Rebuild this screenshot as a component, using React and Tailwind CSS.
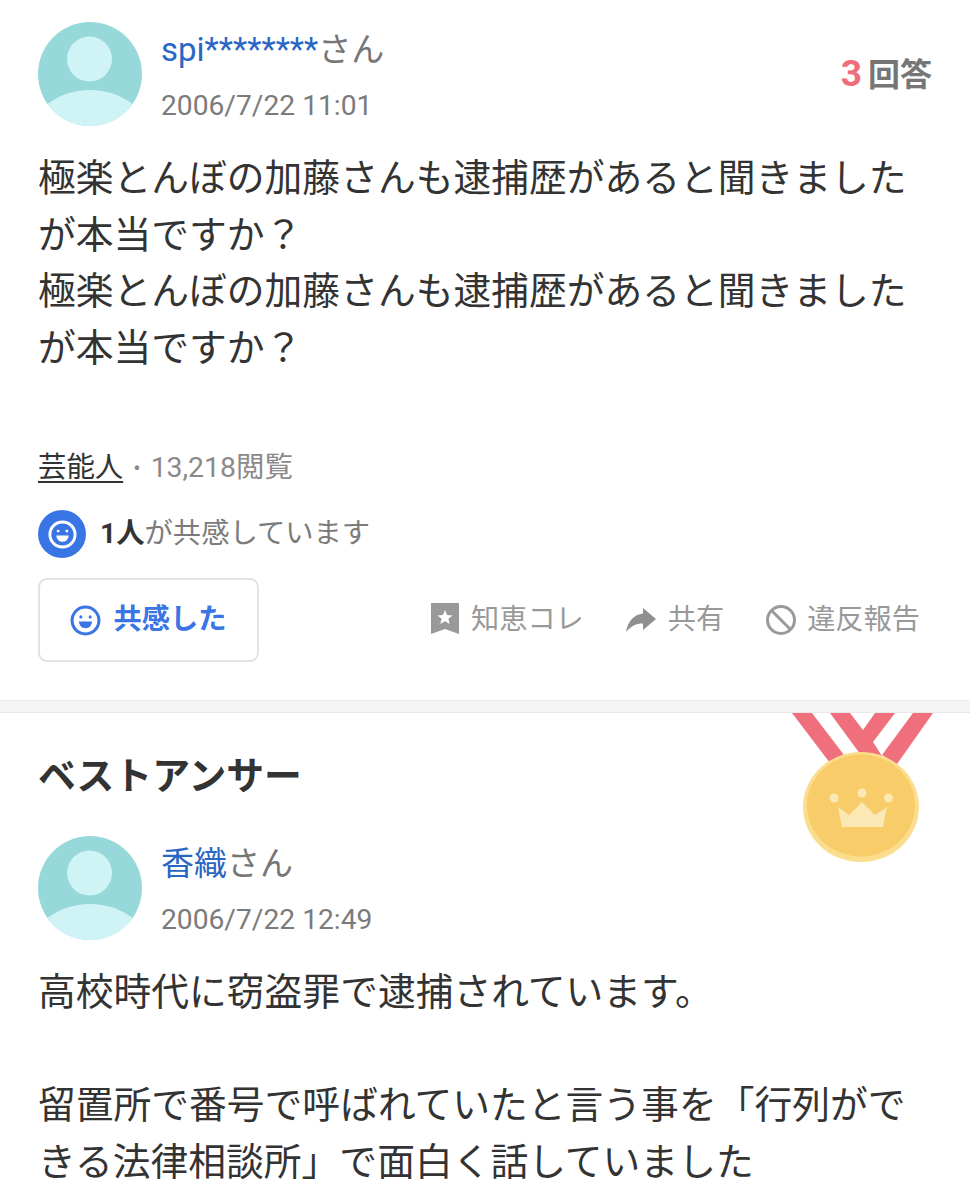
function Avatar() {
  return (
    <svg width="104" height="104" viewBox="0 0 104 104" className="shrink-0">
      <circle cx="52" cy="52" r="52" fill="#97d9da" />
      <circle cx="51.5" cy="37" r="22.5" fill="#d0f3f5" />
      <path d="M9.5 82 Q28 68 52 68 Q76 68 94.5 82 A52 52 0 0 1 9.5 82 Z" fill="#d0f3f5" />
    </svg>
  );
}

function Smile({ size, color, stroke = 3 }) {
  return (
    <svg width={size} height={size} viewBox="0 0 30 30" className="shrink-0">
      <circle cx="15" cy="15" r="13" fill="none" stroke={color} strokeWidth={stroke} />
      <circle cx="10.5" cy="11.5" r="1.5" fill={color} />
      <circle cx="19.5" cy="11.5" r="1.5" fill={color} />
      <path d="M8.5 16 H21.5 Q20.5 22.5 15 22.5 Q9.5 22.5 8.5 16 Z" fill={color} />
    </svg>
  );
}

function UserHead({ name, suffix, date, right }) {
  return (
    <div className="flex items-start">
      <Avatar />
      <div className="ml-[19px] flex-1">
        <div className="mt-[2px] h-[52px] text-[33px] leading-[52px] text-[#767676]">
          <span className="text-[#2a66c4]">{name}</span>{suffix}
        </div>
        <div className="mt-[4px] text-[28.2px] leading-[52px] text-[#7b7b7b]">{date}</div>
      </div>
      {right}
    </div>
  );
}

function Medal() {
  return (
    <svg width="170" height="157" viewBox="0 13 170 157" className="absolute right-0 top-0 mr-[20px]">
      <path d="M12 13 H32 L64 55 L50 63 Z M50 13 H70 L83 30 L95 13 H115 L93 42 L102 56 L86 62 Z M133 13 H153 L117 64 L102 55 Z" fill="#ef6f7c" />
      <ellipse cx="81" cy="107" rx="58" ry="55" fill="#fbdd8e" />
      <ellipse cx="81" cy="105.5" rx="54" ry="51" fill="#f8cc68" />
      <circle cx="54" cy="98" r="4.5" fill="#fbe8b4" />
      <circle cx="82" cy="93" r="4.5" fill="#fbe8b4" />
      <circle cx="108.5" cy="98" r="4.5" fill="#fbe8b4" />
      <path d="M58 107 L69 115 L82 102 L95 115 L107 107 L103 127 H62 Z" fill="#fbe8b4" />
    </svg>
  );
}

export default function App() {
  return (
    <div
      className="h-[1200px] w-[970px] overflow-hidden bg-white"
      style={{ fontFamily: 'Roboto, "Noto Sans CJK JP", sans-serif' }}
    >
      <section className="h-[700px] px-[38px] pt-[22px]">
        <UserHead
          name="spi********"
          suffix="さん"
          date="2006/7/22 11:01"
          right={
            <div className="mt-[30px] text-[37px] font-bold leading-[44px] text-[#767676]">
              <span className="text-[#ee6f7b]">3</span>
              <span className="ml-[6px] text-[32px]">回答</span>
            </div>
          }
        />
        <div className="mt-[18px] text-[37.77px] leading-[56.5px] text-[#333333]">
          <p>極楽とんぼの加藤さんも逮捕歴があると聞きました</p>
          <p>が本当ですか？</p>
          <p>極楽とんぼの加藤さんも逮捕歴があると聞きました</p>
          <p>が本当ですか？</p>
        </div>
        <div className="mt-[70px] flex h-[44px] items-center text-[28.4px] text-[#8a8a8a]">
          <span className="text-[#333333] underline underline-offset-[4px]">芸能人</span>
          <span className="mx-[10px] text-[22px]">•</span>
          <span>13,218閲覧</span>
        </div>
        <div className="mt-[20px] flex h-[48px] items-center">
          <span className="flex h-[48px] w-[48px] items-center justify-center rounded-full bg-[#3a75e6]">
            <Smile size={29} color="#ffffff" />
          </span>
          <span className="ml-[14px] text-[28.3px] text-[#7b7b7b]">
            <b className="text-[#333333]">1人</b>が共感しています
          </span>
        </div>
        <div className="mt-[20px] flex items-center">
          <button className="flex h-[84px] w-[221px] items-center justify-center gap-[12px] rounded-[9px] border-2 border-[#e3e3e3] bg-white text-[28.3px] font-bold text-[#3a75e6]">
            <Smile size={31} color="#3a75e6" />
            共感した
          </button>
          <div className="ml-[172px] flex items-center text-[28.2px] text-[#999999]">
            <svg width="28" height="31" viewBox="0 0 28 31" className="-mt-[2px] shrink-0">
              <path d="M0 0 H28 V31 L14 26 L0 31 Z" fill="#999999" />
              <path d="M14 7 L16.2 12 L21.5 12.4 L17.4 15.8 L18.7 21 L14 18.2 L9.3 21 L10.6 15.8 L6.5 12.4 L11.8 12 Z" fill="#ffffff" />
            </svg>
            <span className="ml-[12px]">知恵コレ</span>
            <svg width="30" height="24" viewBox="0 0 30 24" className="ml-[42px] shrink-0">
              <path d="M0 24 C2 13 8 6.5 17 5.5 V0 L30 11 L17 22 V15.500 C10 15.500 5 18 0 24 Z" fill="#8f8f8f" />
            </svg>
            <span className="ml-[12px]">共有</span>
            <svg width="30" height="30" viewBox="0 0 30 30" className="ml-[42px] shrink-0">
              <circle cx="15" cy="15" r="13.5" fill="none" stroke="#999999" strokeWidth="3" />
              <path d="M5.5 5.5 L24.5 24.5" stroke="#999999" strokeWidth="3" />
            </svg>
            <span className="ml-[11px]">違反報告</span>
          </div>
        </div>
      </section>

      <div className="h-[13px] border-y border-[#e8e8e8] bg-[#f5f5f5]" />

      <section className="relative px-[38px] pt-[40px]">
        <Medal />
        <h2 className="text-[37.8px] font-bold leading-[46px] text-[#333333]">ベストアンサー</h2>
        <div className="mt-[37px]">
          <UserHead name="香織" suffix="さん" date="2006/7/22 12:49" />
        </div>
        <div className="mt-[18px] text-[37.77px] leading-[56.5px] text-[#333333]">
          <p>高校時代に窃盗罪で逮捕されています。</p>
          <p className="h-[56.5px]"></p>
          <p>留置所で番号で呼ばれていたと言う事を「行列がで</p>
          <p>きる法律相談所」で面白く話していました</p>
        </div>
      </section>
    </div>
  );
}
